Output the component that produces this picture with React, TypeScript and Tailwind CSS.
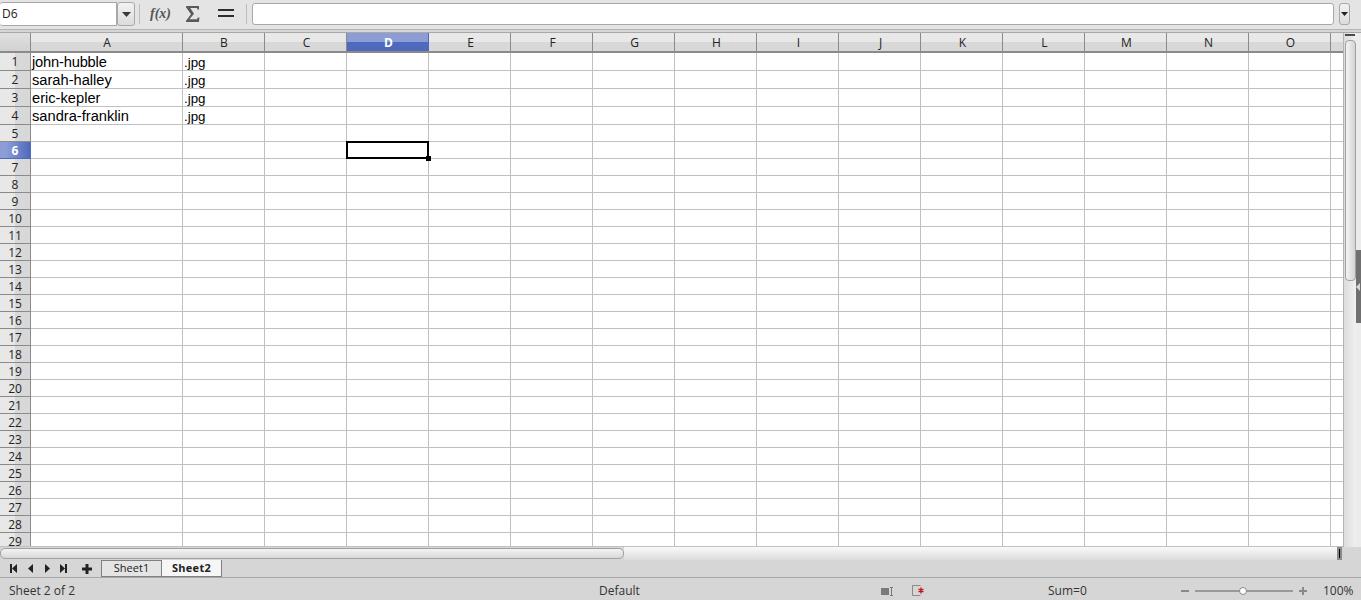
const COLUMNS = ["A", "B", "C", "D", "E", "F", "G", "H", "I", "J", "K", "L", "M", "N", "O", ""];
const ROWS = Array.from({ length: 29 }, (_, i) => i + 1);
const NAMES: Record<number, string> = {
  1: "john-hubble",
  2: "sarah-halley",
  3: "eric-kepler",
  4: "sandra-franklin",
};

function colWidth(i: number) {
  if (i === 0) return "w-[152px] pl-px";
  if (i === 1) return "w-[82px] pl-px";
  if (i === 15) return "w-[12px]";
  return "w-[82px] pl-[2px]";
}

function Caret() {
  return (
    <svg width="9" height="5" viewBox="0 0 9 5">
      <path d="M0 0h9L4.5 5z" fill="#3a3a3a" />
    </svg>
  );
}

function Toolbar() {
  return (
    <div className="flex h-[30px] shrink-0 items-start border-b border-[#b4b4b4] bg-[#e4e4e4] pt-[2px]">
      <div className="flex h-[24px] w-[117px] items-center rounded-l-[3px] border border-l-0 border-[#a8a8a8] bg-white pl-[2px] text-[12px] text-[#222]">
        D6
      </div>
      <div className="flex h-[24px] w-[18px] items-center justify-center rounded-[3px] border border-[#a8a8a8] bg-gradient-to-b from-[#f2f2f2] to-[#dcdcdc]">
        <Caret />
      </div>
      <div className="ml-[4px] mt-[2px] h-[20px] w-px bg-[#bcbcbc]" />
      <div
        className="ml-[10px] mt-[3px] w-[22px] text-[14px] italic leading-[18px] font-semibold whitespace-nowrap text-[#555]"
        style={{ fontFamily: "'Liberation Serif', serif" }}
      >
        f(x)
      </div>
      <svg className="ml-[13px] mt-[3px]" width="15" height="18" viewBox="0 0 15 20" preserveAspectRatio="none">
        <path d="M1 1h13v4h-1.400l-.6-1.800H5.200L9 9.600 4.400 15.800H12l.8-2H14.400L14 19H1v-1.600L6 10.400 1 2.600z" fill="#5a5a5a" />
      </svg>
      <div className="ml-[18px] mt-[7px] flex w-[16px] flex-col gap-[4px]">
        <div className="h-[2px] bg-[#2e2e2e]" />
        <div className="h-[2px] bg-[#2e2e2e]" />
      </div>
      <div className="ml-[12px] mt-[2px] h-[20px] w-px bg-[#bcbcbc]" />
      <div className="ml-[5px] mt-px h-[22px] w-[1082px] rounded-[3px] border border-[#a8a8a8] bg-white" />
      <div className="ml-[5px] mt-px flex h-[22px] w-[11px] items-center justify-center rounded-[3px] border border-[#a8a8a8] bg-gradient-to-b from-[#f2f2f2] to-[#dcdcdc]">
        <svg width="7" height="4" viewBox="0 0 7 4">
          <path d="M0 0h7L3.500 4z" fill="#222" />
        </svg>
      </div>
    </div>
  );
}

function ColumnHeader() {
  return (
    <div className="flex h-[20px] shrink-0 border-b-2 border-[#8a8a8a] text-[12px] leading-[20px] text-[#222]">
      <div className="w-[31px] shrink-0 border-r border-[#8a8a8a] bg-gradient-to-b from-[#e0e0e0] to-[#d2d2d2]" />
      {COLUMNS.map((c, i) =>
        c === "D" ? (
          <div
            key={i}
            className={`${colWidth(i)} shrink-0 border-r border-[#4f69bd] bg-gradient-to-b from-[#8c9dd6] from-50% to-[#4f69bd] to-50% text-center font-bold text-white`}
          >
            {c}
          </div>
        ) : (
          <div
            key={i}
            className={`${colWidth(i)} shrink-0 border-r border-[#8a8a8a] bg-gradient-to-b from-[#e8e8e8] from-50% to-[#d8d8d8] to-50% text-center ${i === 15 ? "border-r-0" : ""}`}
          >
            {c}
          </div>
        ),
      )}
    </div>
  );
}

function Row({ n }: { n: number }) {
  const active = n === 6;
  return (
    <div className={`flex shrink-0 ${n <= 4 ? "h-[18px]" : "h-[17px]"}`}>
      <div
        className={`w-[31px] shrink-0 border-r border-b text-center text-[12px] leading-[18px] ${
          active
            ? "border-[#4f69bd] bg-gradient-to-r from-[#8c9dd6] from-20% to-[#4f69bd] font-bold text-white"
            : "border-[#8a8a8a] bg-gradient-to-r from-[#e8e8e8] from-50% to-[#d8d8d8] to-50% text-[#222]"
        }`}
      >
        {n}
      </div>
      {COLUMNS.map((c, i) => (
        <div
          key={i}
          className={`${i === 0 ? "w-[152px]" : i === 15 ? "w-[12px]" : "w-[82px]"} relative shrink-0 border-b border-[#c0c0c0] bg-white ${i === 15 ? "" : "border-r"} ${c === "D" && active ? "z-10" : ""}`}
          style={{ fontFamily: "'Liberation Sans', sans-serif" }}
        >
          {c === "A" && NAMES[n] && (
            <span className={`block pl-px text-[14.67px] leading-[19px] whitespace-nowrap text-black ${n === 1 ? "tracking-[-0.18px]" : ""}`}>
              {NAMES[n]}
            </span>
          )}
          {c === "B" && n <= 4 && (
            <span className="block pl-[1px] pt-px text-[13.33px] leading-[18px] text-black">.jpg</span>
          )}
          {c === "D" && active && (
            <div className="absolute -top-px -left-px h-[18px] w-[83px] border-2 border-black">
              <div className="absolute -right-[4px] -bottom-[4px] h-[5px] w-[5px] bg-black" />
            </div>
          )}
        </div>
      ))}
    </div>
  );
}

function VerticalScrollbar() {
  return (
    <div className="flex w-[13px] shrink-0 flex-col items-center border-l border-[#b4b4b4] bg-gradient-to-r from-[#dcdcdc] to-[#f0f0f0]">
      <div className="mt-px h-[2px] w-[10px] bg-[#4a4a4a]" />
      <div className="mt-[4px] h-[241px] w-[11px] rounded-[4px] border border-[#a0a0a0] bg-gradient-to-r from-[#f4f4f4] to-[#d4d4d4]" />
    </div>
  );
}

function SideHandle() {
  return (
    <div className="flex w-[5px] shrink-0 flex-col bg-[#ececec]">
      <div className="mt-[217px] flex h-[73px] items-center bg-[#6f6f6f]">
        <div className="h-0 w-0 border-y-[4px] border-r-[4px] border-y-transparent border-r-[#d8d8d8]" />
      </div>
    </div>
  );
}

function NavIcon({ d }: { d: string }) {
  return (
    <svg width="7" height="9" viewBox="0 0 7 9">
      <path d={d} fill="#222" />
    </svg>
  );
}

function HorizontalScrollbar() {
  return (
    <div className="flex h-[13px] shrink-0">
      <div className="mt-px h-[11px] w-[624px] rounded-[5px] border border-[#a0a0a0] bg-gradient-to-b from-[#f4f4f4] to-[#d8d8d8]" />
      <div className="h-[13px] w-[713px] bg-gradient-to-b from-[#fafafa] to-[#dcdcdc]" />
      <div className="flex h-[13px] w-[5px] items-center justify-center bg-[#8a8a8a]">
        <div className="h-[9px] w-px bg-black" />
      </div>
    </div>
  );
}

function TabBar() {
  return (
    <div className="flex h-[17px] shrink-0 items-start text-[11px] text-[#222]">
      <div className="ml-[10px] mt-[4px] flex items-center">
        <NavIcon d="M0 0h2v9H0zM7 0v9L2 4.500z" />
        <div className="ml-[10px]">
          <NavIcon d="M6 0v9L1 4.500z" />
        </div>
        <div className="ml-[10px]">
          <NavIcon d="M1 0v9l5-4.500z" />
        </div>
        <div className="ml-[9px]">
          <NavIcon d="M0 0v9l5-4.500zM5 0h2v9H5z" />
        </div>
      </div>
      <svg className="ml-[15px] mt-[4px]" width="10" height="10" viewBox="0 0 10 10">
        <path d="M3.500 0h3v3.500H10v3H6.500V10h-3V6.500H0v-3h3.500z" fill="#222" />
      </svg>
      <div className="ml-[9px] h-[17px] w-[61px] border border-[#808080] bg-[#e4e4e4] text-center leading-[14px]">
        Sheet1
      </div>
      <div className="h-[17px] w-[60px] border-r border-b border-[#808080] bg-[#f6f6f6] text-center leading-[15px] font-bold tracking-[0.3px]">
        Sheet2
      </div>
    </div>
  );
}

function StatusBar() {
  return (
    <div className="relative flex h-[23px] shrink-0 items-center border-t border-[#a8a8a8] pt-[4px] text-[12px] text-[#333]">
      <span className="w-[590px] pl-[9px]">Sheet 2 of 2</span>
      <span className="w-[281px] pl-[9px]">Default</span>
      <svg width="12" height="9" viewBox="0 0 12 9" className="ml-[10px]">
        <path d="M0 1h8v7H0z" fill="#7a7a7a" />
        <path d="M9 .5h3M10.500.5v8M9 8.500h3" stroke="#7a7a7a" fill="none" />
      </svg>
      <svg width="13" height="12" viewBox="0 0 13 12" className="ml-[19px]">
        <path d="M8.500.5H.5v10h8" stroke="#8a8a8a" fill="none" />
        <path d="M9 2.500v6M6.500 4l5 3M11.500 4l-5 3" stroke="#c01818" strokeWidth="1.400" />
      </svg>
      <span className="ml-[123px] w-[133px]">Sum=0</span>
      <div className="h-[2px] w-[8px] bg-[#8a8a8a]" />
      <div className="relative ml-[6px] h-[2px] w-[98px] bg-[#9a9a9a]">
        <div className="absolute -top-[3px] left-[44px] h-[8px] w-[8px] rounded-full border border-[#8a8a8a] bg-white" />
      </div>
      <svg width="8" height="8" viewBox="0 0 8 8" className="ml-[6px]">
        <path d="M3 0h2v3h3v2H5v3H3V5H0V3h3z" fill="#8a8a8a" />
      </svg>
      <span className="ml-[16px]">100%</span>
    </div>
  );
}

export default function App() {
  return (
    <div className="flex h-[600px] w-[1361px] flex-col overflow-hidden bg-[#d6d6d6]" style={{ fontFamily: "'Open Sans', sans-serif" }}>
      <Toolbar />
      <div className="h-[2px] shrink-0 bg-[#d6d6d6]" />
      <div className="flex h-[515px] shrink-0 border-t border-[#a8a8a8]">
        <div className="flex w-[1343px] shrink-0 flex-col overflow-hidden border-b border-[#c0c0c0]">
          <ColumnHeader />
          {ROWS.map((n) => (
            <Row key={n} n={n} />
          ))}
        </div>
        <VerticalScrollbar />
        <SideHandle />
      </div>
      <HorizontalScrollbar />
      <TabBar />
      <StatusBar />
    </div>
  );
}
